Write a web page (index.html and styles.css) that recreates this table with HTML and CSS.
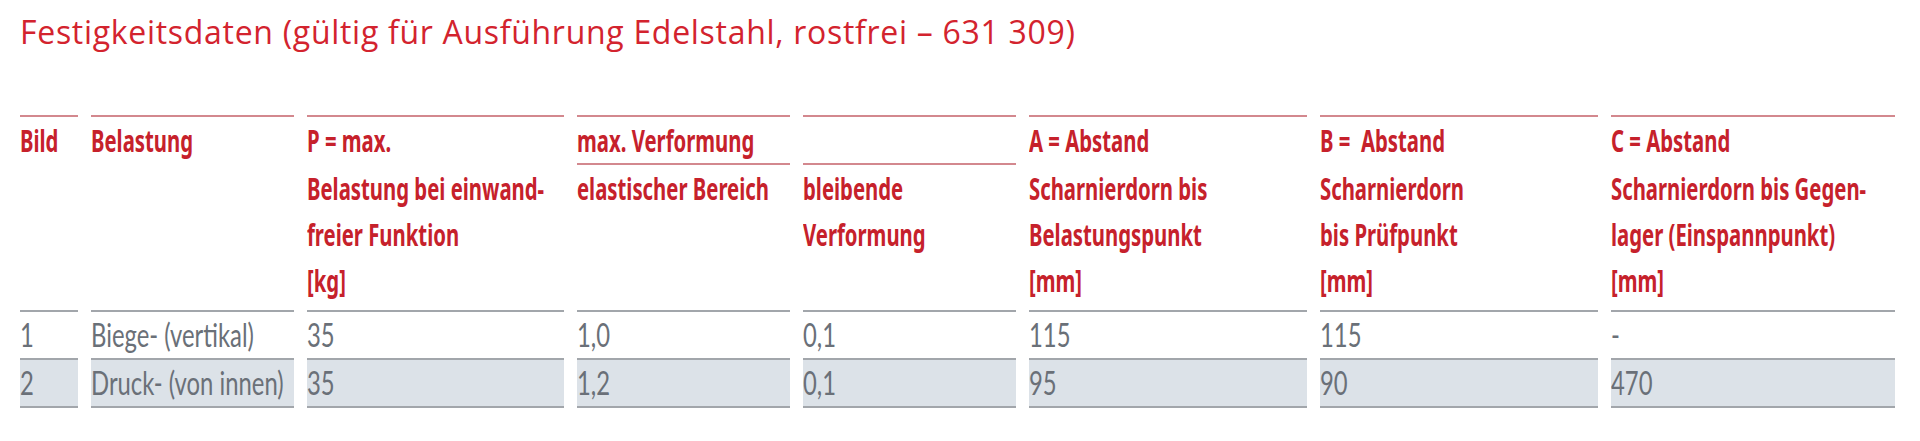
FILE: index.html
```html
<!DOCTYPE html>
<html lang="de">
<head>
<meta charset="utf-8">
<title>Festigkeitsdaten</title>
<link rel="stylesheet" href="styles.css">
</head>
<body>
<h1 class="title">Festigkeitsdaten (gültig für Ausführung Edelstahl, rostfrei – 631 309)</h1>
<table class="data">
  <colgroup>
    <col class="c-bild"><col class="c-bel"><col class="c-p"><col class="c-el"><col class="c-bl"><col class="c-a"><col class="c-b"><col class="c-c">
  </colgroup>
  <thead>
    <tr class="h1">
      <th><span class="s">Bild</span></th>
      <th><span class="s">Belastung</span></th>
      <th><span class="s">P = max.</span></th>
      <th><span class="s">max. Verformung</span></th>
      <th></th>
      <th><span class="s">A = Abstand</span></th>
      <th><span class="s">B =&nbsp; Abstand</span></th>
      <th><span class="s">C = Abstand</span></th>
    </tr>
    <tr class="h2">
      <th></th>
      <th></th>
      <th><span class="s">Belastung bei einwand-<br>freier Funktion<br>[kg]</span></th>
      <th class="ruled"><span class="s">elastischer Bereich</span></th>
      <th class="ruled"><span class="s">bleibende<br>Verformung</span></th>
      <th><span class="s">Scharnierdorn bis<br>Belastungspunkt<br>[mm]</span></th>
      <th><span class="s">Scharnierdorn<br>bis Prüfpunkt<br>[mm]</span></th>
      <th><span class="s">Scharnierdorn bis Gegen-<br>lager (Einspannpunkt)<br>[mm]</span></th>
    </tr>
  </thead>
  <tbody>
    <tr>
      <td><span class="s">1</span></td>
      <td><span class="s">Biege- (vertikal)</span></td>
      <td><span class="s">35</span></td>
      <td><span class="s">1,0</span></td>
      <td><span class="s">0,1</span></td>
      <td><span class="s">115</span></td>
      <td><span class="s">115</span></td>
      <td><span class="s">-</span></td>
    </tr>
    <tr class="alt">
      <td><span class="s">2</span></td>
      <td><span class="s">Druck- (von innen)</span></td>
      <td><span class="s">35</span></td>
      <td><span class="s">1,2</span></td>
      <td><span class="s">0,1</span></td>
      <td><span class="s">95</span></td>
      <td><span class="s">90</span></td>
      <td><span class="s">470</span></td>
    </tr>
  </tbody>
</table>
</body>
</html>
```
FILE: styles.css
```css
html, body {
  margin: 0;
  padding: 0;
  background: #ffffff;
}

.title {
  margin: 0;
  padding: 12px 0 0 20px;
  height: 102px;
  box-sizing: border-box;
  font-family: "Open Sans", "Noto Sans", sans-serif;
  font-weight: 400;
  font-size: 32px;
  line-height: 40px;
  letter-spacing: 0.7px;
  color: #d3232e;
  white-space: nowrap;
}

.data {
  margin: 13px 0 0 7px;
  border-collapse: separate;
  border-spacing: 13px 0;
  table-layout: fixed;
  width: 1901px;
}

.c-bild { width: 58px; }
.c-bel { width: 203px; }
.c-p { width: 257px; }
.c-el { width: 213px; }
.c-bl { width: 213px; }
.c-a { width: 278px; }
.c-b { width: 278px; }
.c-c { width: 284px; }

.s {
  display: inline-block;
  vertical-align: top;
  transform-origin: 0 0;
  white-space: nowrap;
}

.data th {
  padding: 0;
  text-align: left;
  vertical-align: top;
  font-family: "Noto Sans", "Open Sans", sans-serif;
  font-weight: 700;
  font-size: 31px;
  line-height: 46px;
  color: #c6212b;
  white-space: nowrap;
}

.data th .s {
  transform: scaleX(0.655);
}

.h1 th {
  border-top: 2px solid #d3888e;
}

.h2 th {
  border-top: 2px solid transparent;
  padding-bottom: 7px;
}

.h2 th.ruled {
  border-top-color: #d3888e;
}

.data td {
  padding: 0;
  border-top: 2px solid #a2a6ab;
  font-family: "Lato", "Open Sans", sans-serif;
  font-weight: 400;
  font-size: 32px;
  line-height: 46px;
  color: #6a7078;
  white-space: nowrap;
}

.data td .s {
  transform: scaleX(0.745);
}

.alt td {
  background: #dce2e8;
  border-bottom: 2px solid #a2a6ab;
}
```
